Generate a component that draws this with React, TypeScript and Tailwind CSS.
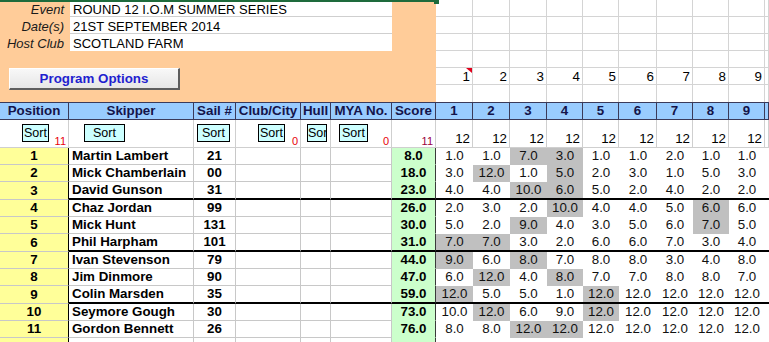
import React from "react";

const RACE_W = [
  "w-[37px]",
  "w-[37px]",
  "w-[37px]",
  "w-[36px]",
  "w-[36px]",
  "w-[38px]",
  "w-[36px]",
  "w-[36px]",
  "w-[36px]",
  "w-[4px]",
];

type Row = { pos: number; name: string; sail: string; score: string; races: string[] };

const ROWS: Row[] = [
  { pos: 1, name: "Martin Lambert", sail: "21", score: "8.0", races: ["1.0", "1.0", "7.0g", "3.0g", "1.0", "1.0", "2.0", "1.0", "1.0"] },
  { pos: 2, name: "Mick Chamberlain", sail: "00", score: "18.0", races: ["3.0", "12.0g", "1.0", "5.0g", "2.0", "3.0", "1.0", "5.0", "3.0"] },
  { pos: 3, name: "David Gunson", sail: "31", score: "23.0", races: ["4.0", "4.0", "10.0g", "6.0g", "5.0", "2.0", "4.0", "2.0", "2.0"] },
  { pos: 4, name: "Chaz Jordan", sail: "99", score: "26.0", races: ["2.0", "3.0", "2.0", "10.0g", "4.0", "4.0", "5.0", "6.0g", "6.0"] },
  { pos: 5, name: "Mick Hunt", sail: "131", score: "30.0", races: ["5.0", "2.0", "9.0g", "4.0", "3.0", "5.0", "6.0", "7.0g", "5.0"] },
  { pos: 6, name: "Phil Harpham", sail: "101", score: "31.0", races: ["7.0g", "7.0g", "3.0", "2.0", "6.0", "6.0", "7.0", "3.0", "4.0"] },
  { pos: 7, name: "Ivan Stevenson", sail: "79", score: "44.0", races: ["9.0g", "6.0", "8.0g", "7.0", "8.0", "8.0", "3.0", "4.0", "8.0"] },
  { pos: 8, name: "Jim Dinmore", sail: "90", score: "47.0", races: ["6.0", "12.0g", "4.0", "8.0g", "7.0", "7.0", "8.0", "8.0", "7.0"] },
  { pos: 9, name: "Colin Marsden", sail: "35", score: "59.0", races: ["12.0g", "5.0", "5.0", "1.0", "12.0g", "12.0", "12.0", "12.0", "12.0"] },
  { pos: 10, name: "Seymore Gough", sail: "30", score: "73.0", races: ["10.0", "12.0g", "6.0", "9.0", "12.0g", "12.0", "12.0", "12.0", "12.0"] },
  { pos: 11, name: "Gordon Bennett", sail: "26", score: "76.0", races: ["8.0", "8.0", "12.0g", "12.0g", "12.0", "12.0", "12.0", "12.0", "12.0"] },
];

const INFO: [string, string][] = [
  ["Event", "ROUND 12 I.O.M SUMMER SERIES"],
  ["Date(s)", "21ST SEPTEMBER 2014"],
  ["Host Club", "SCOTLAND FARM"],
];

function SortBtn({ w, label = "Sort" }: { w: string; label?: string }) {
  return (
    <div
      className={`${w} h-[18px] mt-[4px] shrink-0 overflow-hidden border border-black bg-[#CCFFFF] text-center text-[12.5px] leading-[16px] text-black`}
    >
      {label}
    </div>
  );
}

function TopGrid() {
  return (
    <div className="flex w-[333px] flex-col">
      {[0, 1, 2, 3, 4, 5].map((r) => (
        <div key={r} className="flex h-[17px]">
          {RACE_W.map((w, c) => (
            <div
              key={c}
              className={`${w} relative h-[17px] shrink-0 border-r border-r-[#d4d4d4] ${
                r < 5 ? "border-b border-b-[#d4d4d4]" : ""
              } pr-[2px] text-right text-[13.33px] leading-[18px] text-black`}
            >
              {r === 4 && c < 9 ? c + 1 : ""}
              {r === 4 && c === 0 && (
                <svg className="absolute right-0 top-0" width="6" height="5" viewBox="0 0 6 5">
                  <polygon points="0,0 6,0 6,5" fill="#e0001b" />
                </svg>
              )}
            </div>
          ))}
        </div>
      ))}
    </div>
  );
}

function HeaderRow() {
  const head = "h-[16px] shrink-0 border-r border-r-[#3a3a5a] text-center font-bold text-[13.33px] leading-[16px] text-[#14144a]";
  return (
    <div className="flex h-[18px] border-y border-y-[#3a3a5a] bg-[#99CCFF]">
      <div className={`w-[69px] ${head}`}>Position</div>
      <div className={`w-[125px] ${head}`}>Skipper</div>
      <div className={`w-[42px] ${head}`}>Sail #</div>
      <div className={`w-[65px] ${head}`}>Club/City</div>
      <div className={`w-[30px] ${head}`}>Hull</div>
      <div className={`w-[61px] ${head} whitespace-nowrap`}>MYA No.</div>
      <div className={`w-[44px] ${head}`}>Score</div>
      {RACE_W.map((w, c) => (
        <div key={c} className={`${w} ${head}`}>
          {c < 9 ? c + 1 : ""}
        </div>
      ))}
    </div>
  );
}

function SortRow() {
  const cell = "flex h-[28px] shrink-0 border-r border-b border-r-[#cfcfcf] border-b-[#cfcfcf]";
  const red = "ml-auto self-end pr-[2px] text-[11px] leading-[12px] text-[#e8000b]";
  return (
    <div className="flex h-[28px]">
      <div className={`w-[69px] ${cell} pl-[22px]`}>
        <SortBtn w="w-[27px]" />
        <span className={red}>11</span>
      </div>
      <div className={`w-[125px] ${cell} pl-[15px]`}>
        <SortBtn w="w-[41px]" />
      </div>
      <div className={`w-[42px] ${cell} pl-[3px]`}>
        <SortBtn w="w-[33px]" />
      </div>
      <div className={`w-[65px] ${cell} pl-[22px]`}>
        <SortBtn w="w-[27px]" />
        <span className={red}>0</span>
      </div>
      <div className={`w-[30px] ${cell} pl-[6px]`}>
        <SortBtn w="w-[20px]" label="Sor" />
      </div>
      <div className={`w-[61px] ${cell} pl-[8px]`}>
        <SortBtn w="w-[29px]" />
        <span className={red}>0</span>
      </div>
      <div className={`w-[44px] ${cell}`}>
        <span className="ml-auto self-end pr-[2px] text-[11px] leading-[12px] text-[#99003d]">11</span>
      </div>
      {RACE_W.map((w, c) => (
        <div key={c} className={`${w} ${cell} justify-end items-end pr-[2px] text-[13.33px] leading-[16px] text-black`}>
          {c < 9 ? "12" : ""}
        </div>
      ))}
    </div>
  );
}

function DataRow({ row, end }: { row: Row | null; end: boolean }) {
  const h = end ? "h-[18px]" : "h-[17px]";
  const grid = end ? "border-b-2 border-b-black" : "border-b border-b-[#c8c8c8]";
  const bold = "font-bold text-[13.33px] text-black";
  return (
    <div className={`flex ${h}`}>
      <div
        className={`w-[69px] ${h} shrink-0 flex items-center justify-center border-r border-r-black border-b border-b-[#c8c8c8] bg-[#FFFF99] ${bold}`}
      >
        {row?.pos}
      </div>
      <div className={`w-[125px] ${h} shrink-0 flex items-center whitespace-nowrap border-r border-r-[#c8c8c8] ${grid} pl-[3px] ${bold}`}>
        {row?.name}
      </div>
      <div className={`w-[42px] ${h} shrink-0 flex items-center justify-center border-r border-r-[#c8c8c8] ${grid} ${bold}`}>
        {row?.sail}
      </div>
      <div className={`w-[65px] ${h} shrink-0 border-r border-r-[#c8c8c8] ${grid}`} />
      <div className={`w-[30px] ${h} shrink-0 border-r border-r-[#c8c8c8] ${grid}`} />
      <div className={`w-[61px] ${h} shrink-0 border-r border-r-[#c8c8c8] ${grid}`} />
      <div
        className={`w-[44px] ${h} shrink-0 flex items-center justify-center border-r border-r-[#3a3a3a] bg-[#CCFFCC] ${
          end ? "border-b-2 border-b-black" : "border-b border-b-[#CCFFCC]"
        } ${bold}`}
      >
        {row?.score}
      </div>
      {RACE_W.map((w, c) => {
        const v = row && c < 9 ? row.races[c] : "";
        const grey = v.endsWith("g");
        const txt = grey ? v.slice(0, -1) : v;
        const bg = grey ? "bg-[#C0C0C0]" : "bg-white";
        const bb = end ? "border-b-2 border-b-black" : grey ? "border-b border-b-[#C0C0C0]" : "border-b border-b-white";
        return (
          <div
            key={c}
            className={`${w} ${h} shrink-0 flex items-center justify-center ${bg} ${bb} text-[13.33px] text-[#111]`}
          >
            {txt}
          </div>
        );
      })}
    </div>
  );
}

export default function App() {
  return (
    <div className="relative h-[342px] w-[769px] overflow-hidden bg-white font-['Liberation_Sans',Arial,sans-serif] text-black">
      <div className="flex h-[102px]">
        <div className="flex h-[102px] w-[436px] shrink-0 flex-col bg-[#FFCC99]">
          {INFO.map(([label, value], i) => (
            <div key={label} className="flex h-[17px]">
              <div className="w-[70px] shrink-0 pr-[6px] text-right text-[13px] italic leading-[19px] text-[#1a1a1a]">
                {label}
              </div>
              <div
                className={`w-[322px] shrink-0 bg-white pl-[3px] text-[13px] leading-[19px] text-black ${
                  i < 2 ? "h-[17px] border-b border-b-[#cfcfcf]" : "h-[17px]"
                }`}
              >
                {value}
              </div>
            </div>
          ))}
          <div className="ml-[9px] mt-[17px] flex h-[22px] w-[171px] items-center justify-center border-l border-t border-l-white border-t-white border-b-2 border-r-2 border-b-[#5e5e5e] border-r-[#5e5e5e] bg-gradient-to-b from-[#f8f8f8] to-[#e6e6e6] text-[13.33px] font-bold text-[#1f1fcf]">
            Program Options
          </div>
        </div>
        <TopGrid />
      </div>
      <HeaderRow />
      <SortRow />
      {ROWS.map((r) => (
        <DataRow key={r.pos} row={r} end={r.pos === 3 || r.pos === 6 || r.pos === 9} />
      ))}
      <DataRow row={null} end={false} />
      <div className="absolute left-0 top-0 h-[2px] w-[436px] bg-[#1e6b3c]" />
      <div className="absolute left-[434px] top-0 h-[4px] w-[5px] bg-[#1e6b3c]" />
    </div>
  );
}
